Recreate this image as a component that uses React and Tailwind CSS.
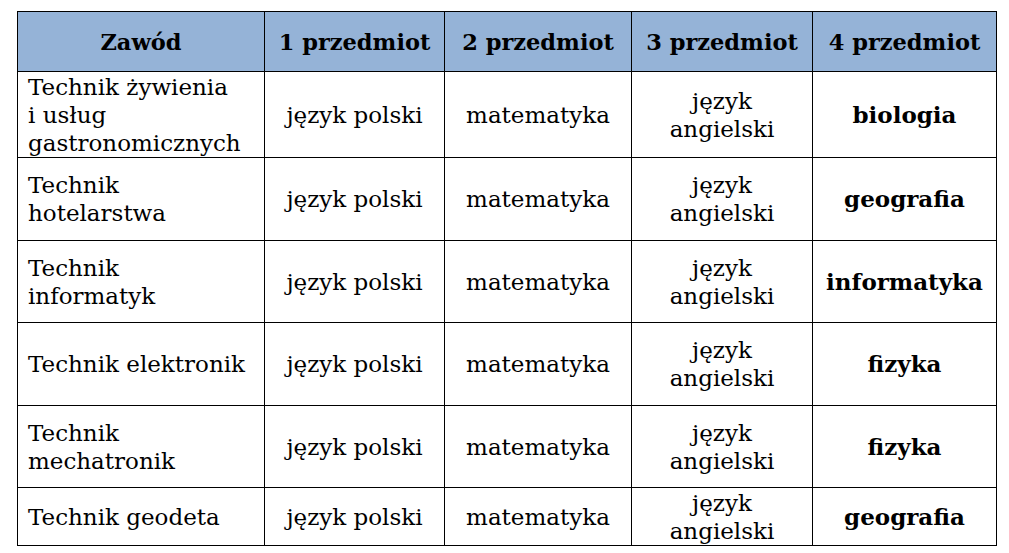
import React from 'react';

const rows = [
  { zawod: ['Technik żywienia', 'i usług', 'gastronomicznych'], p4: 'biologia', h: 'h-[86px]' },
  { zawod: ['Technik', 'hotelarstwa'], p4: 'geografia', h: 'h-[83px]' },
  { zawod: ['Technik', 'informatyk'], p4: 'informatyka', h: 'h-[82px]' },
  { zawod: ['Technik elektronik'], p4: 'fizyka', h: 'h-[83px]' },
  { zawod: ['Technik', 'mechatronik'], p4: 'fizyka', h: 'h-[82px]' },
  { zawod: ['Technik geodeta'], p4: 'geografia', h: 'h-[58px]' },
];

const cell = 'border-[1.5px] border-black align-middle p-0';

export default function App() {
  return (
    <div
      className="w-[1009px] h-[553px] bg-white pt-[11px] pl-[17px]"
      style={{ fontFamily: '"DejaVu Serif", serif' }}
    >
      <table className="table-fixed border-collapse text-[23px] leading-[28px] text-black">
        <colgroup>
          <col className="w-[247px]" />
          <col className="w-[180px]" />
          <col className="w-[187px]" />
          <col className="w-[181px]" />
          <col className="w-[184px]" />
        </colgroup>
        <thead>
          <tr className="h-[60px] bg-[#95b3d7] font-bold text-[22.5px]">
            <th className={`${cell} text-center`}>Zawód</th>
            <th className={`${cell} text-center`}>1 przedmiot</th>
            <th className={`${cell} text-center`}>2 przedmiot</th>
            <th className={`${cell} text-center`}>3 przedmiot</th>
            <th className={`${cell} text-center`}>4 przedmiot</th>
          </tr>
        </thead>
        <tbody>
          {rows.map((r, i) => (
            <tr key={i} className={r.h}>
              <td className={`${cell} pl-[10px] text-left`}>
                {r.zawod.map((line, j) => (
                  <div key={j} className="whitespace-nowrap">{line}</div>
                ))}
              </td>
              <td className={`${cell} text-center`}>język polski</td>
              <td className={`${cell} text-center`}>matematyka</td>
              <td className={`${cell} text-center`}>
                <div>język</div>
                <div>angielski</div>
              </td>
              <td className={`${cell} text-center font-bold`}>{r.p4}</td>
            </tr>
          ))}
        </tbody>
      </table>
    </div>
  );
}
